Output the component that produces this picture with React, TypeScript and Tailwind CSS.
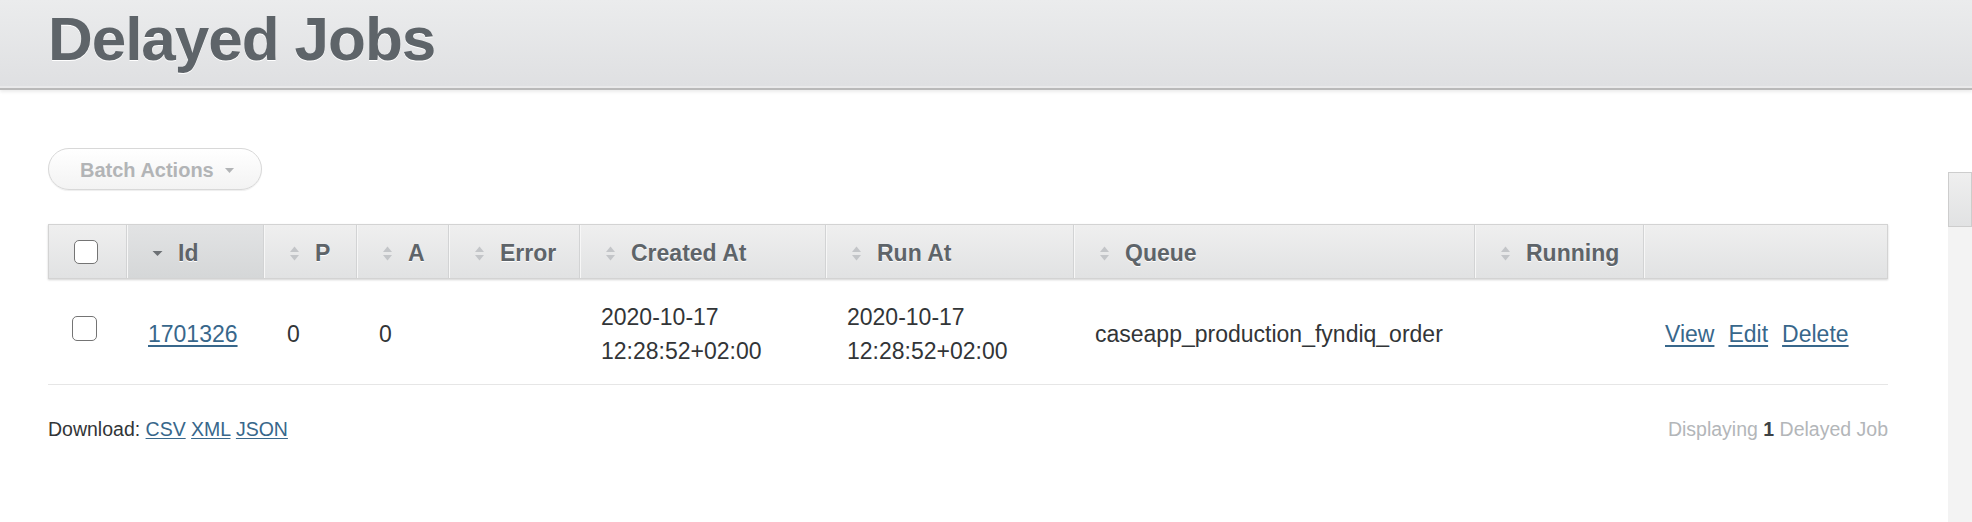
import React from "react";

const cols = "grid-cols-[78px_137px_93px_92px_131px_246px_248px_401px_169px_1fr]";

function SortBoth() {
  return (
    <svg width="11" height="17" viewBox="0 0 11 17" className="shrink-0">
      <polygon points="1,7 5.5,1.5 10,7" fill="#c3c5c8" />
      <polygon points="1,10 5.5,15.5 10,10" fill="#c3c5c8" />
    </svg>
  );
}

function SortDesc() {
  return (
    <svg width="11" height="17" viewBox="0 0 11 17" className="shrink-0">
      <polygon points="0.5,6 10.5,6 5.5,11" fill="#6d7175" />
    </svg>
  );
}

function Checkbox({ small }: { small?: boolean }) {
  return (
    <div
      className={
        "bg-white border-[1.5px] border-[#747474] rounded-[5px] " +
        (small ? "w-[24px] h-[24px]" : "w-[25px] h-[25px]")
      }
    />
  );
}

function Th({
  label,
  sort,
  sorted,
  last,
}: {
  label?: string;
  sort?: "both" | "desc";
  sorted?: boolean;
  last?: boolean;
}) {
  return (
    <div
      className={
        "flex items-center gap-[15px] pl-[25px] pt-[4px] h-full bg-gradient-to-b " +
        (sorted ? "from-[#e2e3e4] to-[#d5d7d8] " : "from-[#efefef] to-[#e1e2e3] ") +
        (last ? "" : "border-r border-[#d2d3d4] ") +
        "shadow-[inset_1px_0_0_#f7f7f7]"
      }
    >
      {sort === "both" && <SortBoth />}
      {sort === "desc" && <SortDesc />}
      {label && (
        <span className="text-[23px] font-bold text-[#5e6469] [text-shadow:0_1px_0_#fff] whitespace-nowrap">
          {label}
        </span>
      )}
    </div>
  );
}

export default function App() {
  return (
    <div className="w-[1972px] h-[522px] overflow-hidden bg-white font-['Liberation_Sans',Arial,sans-serif] text-[#323537]">
      <div className="h-[88px] pl-[48px] pt-[8px] bg-gradient-to-b from-[#ebeced] to-[#dfe0e2] border-b-2 border-[#e9e9ea] shadow-[0_2px_0_#b9b9b9,0_4px_3px_rgba(0,0,0,0.08)] relative z-10">
        <h2 className="text-[62px] leading-none font-bold tracking-[-1.05px] text-[#5e6469] [text-shadow:0_1px_0_#fff]">
          Delayed Jobs
        </h2>
      </div>

      <div className="flex">
        <div className="w-[1888px] shrink-0 pl-[48px] pt-[60px]">
          <button className="h-[42px] w-[214px] rounded-full border border-[#d8d8d8] bg-gradient-to-b from-white to-[#f3f3f3] shadow-[0_1px_1px_rgba(0,0,0,0.07)] pl-[31px] pt-[2px] flex items-center text-[20px] font-bold text-[#b2b4b6]">
            Batch Actions
            <svg width="9" height="5" viewBox="0 0 9 5" className="ml-[11px]">
              <polygon points="0,0 9,0 4.5,5" fill="#b2b4b6" />
            </svg>
          </button>

          <div className="mt-[34px] w-[1840px]">
            <div
              className={
                "grid h-[55px] border border-[#d3d3d3] shadow-[0_1px_2px_rgba(0,0,0,0.18)] " + cols
              }
            >
              <div className="flex items-center pl-[25px] h-full bg-gradient-to-b from-[#efefef] to-[#e1e2e3] border-r border-[#d2d3d4]">
                <Checkbox small />
              </div>
              <Th label="Id" sort="desc" sorted />
              <Th label="P" sort="both" />
              <Th label="A" sort="both" />
              <Th label="Error" sort="both" />
              <Th label="Created At" sort="both" />
              <Th label="Run At" sort="both" />
              <Th label="Queue" sort="both" />
              <Th label="Running" sort="both" />
              <Th last />
            </div>

            <div className={"grid h-[106px] border-b border-[#e6e6e6] text-[23px] " + cols}>
              <div className="flex items-center pl-[24px] pb-[7px]">
                <Checkbox />
              </div>
              <div className="flex items-center pl-[22px] pt-[5px]">
                <a href="#" className="text-[#38678b] underline underline-offset-[3px]">
                  1701326
                </a>
              </div>
              <div className="flex items-center pl-[24px] pt-[5px]">0</div>
              <div className="flex items-center pl-[23px] pt-[5px]">0</div>
              <div className="flex items-center pl-[23px]" />
              <div className="flex items-center pl-[22px] pt-[5px] leading-[34px]">
                <div>
                  2020-10-17
                  <br />
                  12:28:52+02:00
                </div>
              </div>
              <div className="flex items-center pl-[22px] pt-[5px] leading-[34px]">
                <div>
                  2020-10-17
                  <br />
                  12:28:52+02:00
                </div>
              </div>
              <div className="flex items-center pl-[22px] pt-[5px] whitespace-nowrap">
                caseapp_production_fyndiq_order
              </div>
              <div className="flex items-center pl-[22px]" />
              <div className="flex items-center pl-[22px] pt-[5px] gap-[14px]">
                <a href="#" className="text-[#38678b] underline underline-offset-[3px]">View</a>
                <a href="#" className="text-[#38678b] underline underline-offset-[3px]">Edit</a>
                <a href="#" className="text-[#38678b] underline underline-offset-[3px]">Delete</a>
              </div>
            </div>

            <div className="mt-[30px] flex items-center justify-between text-[19.5px] leading-[29px]">
              <div className="text-[#323537]">
                Download:{" "}
                <a href="#" className="text-[#38678b] underline underline-offset-[2px]">CSV</a>{" "}
                <a href="#" className="text-[#38678b] underline underline-offset-[2px]">XML</a>{" "}
                <a href="#" className="text-[#38678b] underline underline-offset-[2px]">JSON</a>
              </div>
              <div className="text-[#b3b6b9]">
                Displaying <b className="text-[#3e4245]">1</b> Delayed Job
              </div>
            </div>
          </div>
        </div>

        <div className="ml-[60px] flex-1 min-w-0 mt-[84px] overflow-hidden">
          <div className="h-[55px] border border-[#cdcdcd] bg-gradient-to-b from-[#efefef] to-[#e1e2e3] flex items-center pl-[22px] whitespace-nowrap">
            <span className="text-[24px] font-bold text-[#5e6469]">Filters</span>
          </div>
          <div className="h-[400px] bg-[#f3f3f3]" />
        </div>
      </div>
    </div>
  );
}
